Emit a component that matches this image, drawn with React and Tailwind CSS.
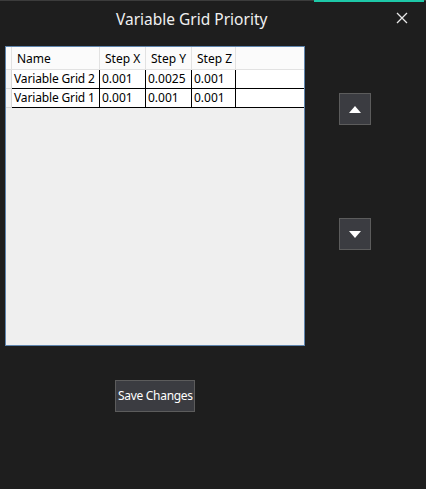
import React from "react";

const cell = "border-r border-b border-black pr-[1px] whitespace-nowrap overflow-hidden";

export default function App() {
  const rows = [
    ["Variable Grid 2", "0.001", "0.0025", "0.001"],
    ["Variable Grid 1", "0.001", "0.001", "0.001"],
  ];
  return (
    <div
      className="w-[426px] h-[489px] bg-[#1e1e1e] flex flex-col overflow-hidden text-white"
      style={{ fontFamily: '"Segoe UI", "Noto Sans", "Open Sans", sans-serif' }}
    >
      {/* top accent line */}
      <div className="flex items-start h-[2px]">
        <div className="w-[314px] h-px bg-[#3c3c3c]" />
        <div className="w-[110px] h-[2px] bg-[#1ec8a8]" />
        <div className="flex-1 h-px bg-[#3c3c3c]" />
      </div>
      {/* title bar */}
      <div className="flex items-center h-[36px] pl-[116px] pr-[18px]">
        <span className="text-[15.5px] leading-none text-[#f0f0f0]">Variable Grid Priority</span>
        <svg className="ml-auto -mt-[4px]" width="12" height="12" viewBox="0 0 12 12">
          <path d="M1 1L11 11M11 1L1 11" stroke="#e8e8e8" strokeWidth="1.3" />
        </svg>
      </div>
      {/* content */}
      <div className="flex mt-[8px] pl-[5px]">
        <div className="w-[300px] h-[300px] border border-[#5f85ad] bg-[#efefef] text-black text-[12px] leading-none flex flex-col"
          style={{ fontFamily: '"Segoe UI", "Noto Sans", sans-serif' }}>
          {/* header */}
          <div className="flex h-[23px] bg-[#fbfbfb] border-b border-[#e2e2e2]">
            <div className="w-[6px] border-r border-[#e2e2e2]" />
            <div className="w-[88px] border-r border-[#e2e2e2] flex items-center pl-[5px] pt-[2px]">Name</div>
            <div className="w-[46px] border-r border-[#e2e2e2] flex items-center pl-[5px] pt-[2px]">Step X</div>
            <div className="w-[46px] border-r border-[#e2e2e2] flex items-center pl-[5px] pt-[2px]">Step Y</div>
            <div className="w-[44px] border-r border-[#e2e2e2] flex items-center pl-[5px] pt-[2px]">Step Z</div>
            <div className="flex-1" />
          </div>
          {rows.map((r, i) => (
            <div key={i} className="flex h-[19px]">
              <div className="w-[6px] bg-[#f4f4f4] border-r border-b border-[#d8d8d8]" />
              <div className="flex flex-1 bg-white">
                <div className={`w-[88px] ${cell} flex items-center pl-[2px] tracking-[-0.15px]`}>{r[0]}</div>
                <div className={`w-[46px] ${cell} flex items-center pl-[2px]`}>{r[1]}</div>
                <div className={`w-[46px] ${cell} flex items-center pl-[2px]`}>{r[2]}</div>
                <div className={`w-[44px] ${cell} flex items-center pl-[2px]`}>{r[3]}</div>
                <div className="flex-1 border-b border-black" />
              </div>
            </div>
          ))}
        </div>
        <div className="flex flex-col ml-[34px] pt-[47px]">
          <button className="w-[32px] h-[32px] bg-[#3b3c41] border border-[#5c5c5c] flex items-center justify-center">
            <svg width="12" height="7" viewBox="0 0 12 7">
              <path d="M6 0L12 7H0Z" fill="#ffffff" />
            </svg>
          </button>
          <button className="w-[32px] h-[32px] mt-[93px] bg-[#3b3c41] border border-[#5c5c5c] flex items-center justify-center">
            <svg width="12" height="7" viewBox="0 0 12 7">
              <path d="M0 0H12L6 7Z" fill="#ffffff" />
            </svg>
          </button>
        </div>
      </div>
      <div className="pl-[115px] mt-[34px]">
        <button className="w-[80px] h-[32px] bg-[#3b3c41] border border-[#5c5c5c] overflow-hidden whitespace-nowrap text-left pl-[2px] text-[12px] tracking-[-0.3px] text-white">
          Save Changes
        </button>
      </div>
    </div>
  );
}
